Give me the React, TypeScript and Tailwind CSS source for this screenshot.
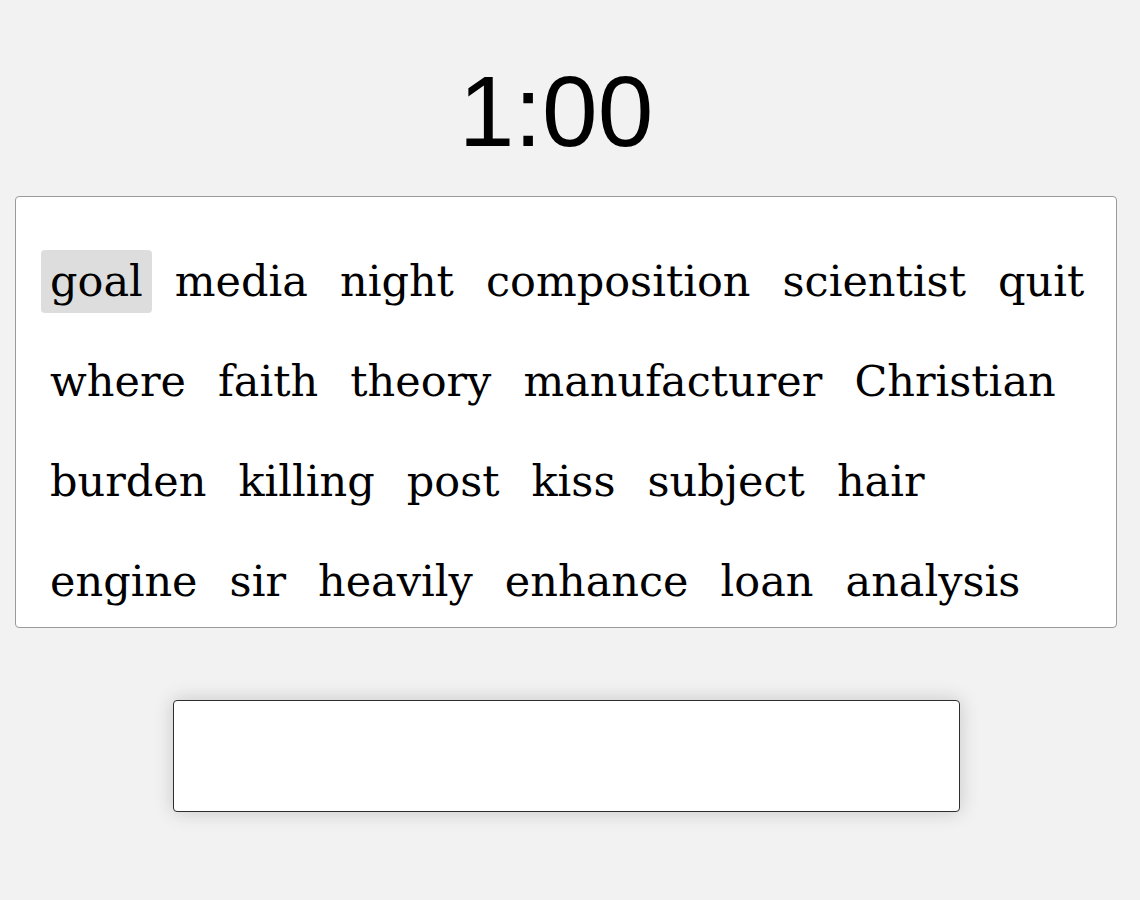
import React from 'react';

const rows: string[][] = [
  ['goal', 'media', 'night', 'composition', 'scientist', 'quit'],
  ['where', 'faith', 'theory', 'manufacturer', 'Christian'],
  ['burden', 'killing', 'post', 'kiss', 'subject', 'hair'],
  ['engine', 'sir', 'heavily', 'enhance', 'loan', 'analysis'],
];

const App: React.FC = () => {
  return (
    <div className="min-h-[900px] w-full bg-[#f2f2f2]">
      <div className="flex w-[1132px] flex-col items-center">
        {/* timer */}
        <div className="mt-[50px] mb-[24px] pr-[20px] font-['Liberation_Sans',Arial,sans-serif] text-[100px] leading-[122px] text-black">
          1:00
        </div>

        {/* words */}
        <div className="h-[432px] w-[1102px] overflow-hidden rounded-[4px] border border-[#9a9a9a] bg-white pt-[53px] pl-[25px]">
          <div className="flex flex-col gap-[37px]">
            {rows.map((row, r) => (
              <div key={r} className="flex gap-[14px]">
                {row.map((word, i) => (
                  <span
                    key={word}
                    className={`h-[63px] rounded-[4px] px-[9px] font-['DejaVu_Serif',Georgia,serif] text-[43px] leading-[63px] text-black ${
                      r === 0 && i === 0 ? 'bg-[#dddddd]' : ''
                    }`}
                  >
                    {word}
                  </span>
                ))}
              </div>
            ))}
          </div>
        </div>

        {/* input */}
        <input
          type="text"
          className="mt-[72px] h-[112px] w-[787px] rounded-[4px] border border-[#2e2e2e] bg-white shadow-[0_0_20px_rgba(0,0,0,0.18)] outline-none"
        />
      </div>
    </div>
  );
};

export default App;
